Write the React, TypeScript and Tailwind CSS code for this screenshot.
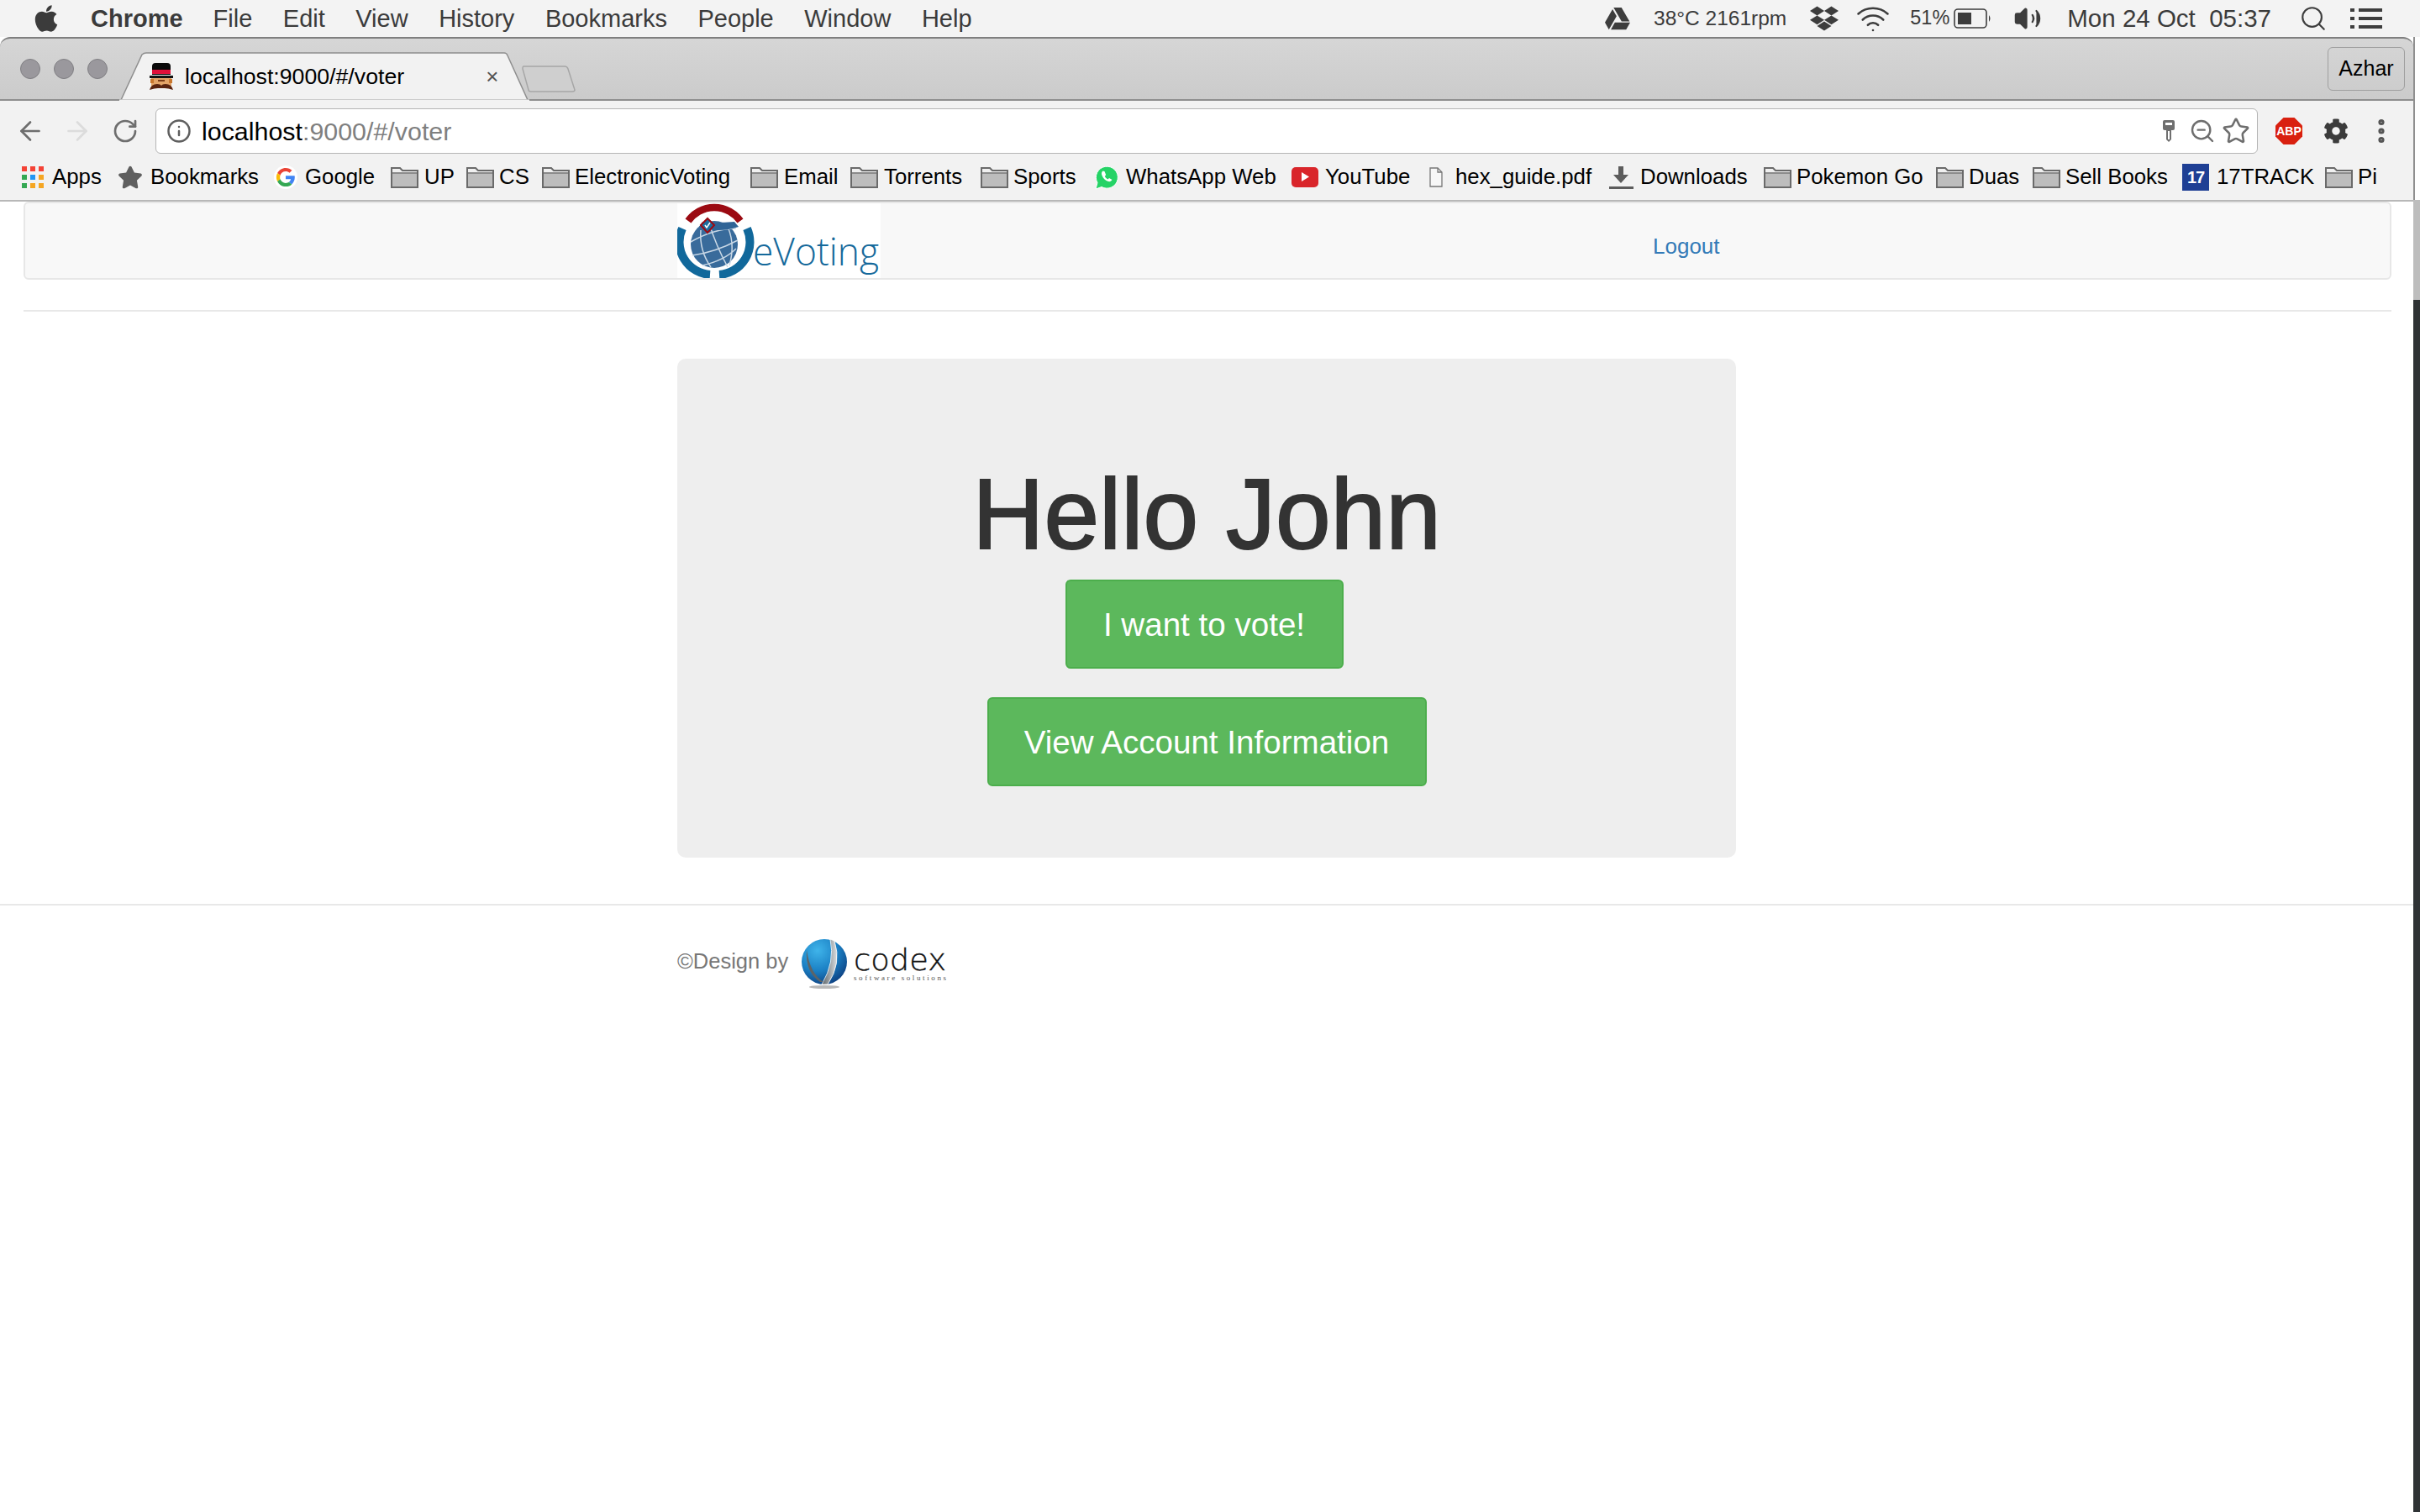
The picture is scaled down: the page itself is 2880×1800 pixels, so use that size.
import { ArrowLeft, ArrowRight, EllipsisVertical, Info, RotateCw, Search, Star, Volume2, Wifi, ZoomOut } from 'lucide-react';
import { FaApple, FaCog, FaDropbox, FaGoogleDrive, FaStar } from 'react-icons/fa';

const menuItems = ['File', 'Edit', 'View', 'History', 'Bookmarks', 'People', 'Window', 'Help'];

const Folder = () => (
  <svg width="33" height="26" viewBox="0 0 33 26" className="shrink-0">
    <path d="M1 25V2h10l3 3h18v20z" fill="#f0f0f0" stroke="#6a6a6a" strokeWidth="2" />
    <rect x="2" y="9" width="29" height="15" fill="#bdbdbd" />
    <path d="M1 8h31" stroke="#6a6a6a" strokeWidth="1.5" />
  </svg>
);

const AppsIcon = () => {
  const colours = ['#f44336', '#f44336', '#f44336', '#34a853', '#2196f3', '#f5a623', '#34a853', '#f5a623', '#f5a623'];
  return (
    <div className="grid grid-cols-3 gap-[4px] shrink-0">
      {colours.map((c, i) => (
        <div key={i} className="w-[6px] h-[6px]" style={{ backgroundColor: c }} />
      ))}
    </div>
  );
};

const GoogleIcon = () => (
  <svg width="28" height="28" viewBox="0 0 48 48" className="shrink-0">
    <circle cx="24" cy="24" r="24" fill="#fff" />
    <path fill="#ea4335" d="M24 12c3 0 5.700 1 7.800 3l5-5C33.700 7.200 29.200 5 24 5 16.600 5 10.200 9.300 7.100 15.500l5.800 4.500C14.400 15.400 18.800 12 24 12z" />
    <path fill="#4285f4" d="M42.500 24.500c0-1.300-.1-2.500-.3-3.500H24v7h10.500c-.5 2.500-1.900 4.500-3.900 6l5.700 4.400c3.700-3.400 6.200-8 6.200-13.900z" />
    <path fill="#fbbc05" d="M12.900 28c-.4-1.200-.6-2.600-.6-4s.2-2.800.6-4l-5.800-4.500C5.800 18 5 21 5 24s.8 6 2.100 8.500z" />
    <path fill="#34a853" d="M24 43c5.100 0 9.500-1.700 12.300-4.600L30.600 34c-1.600 1.100-3.800 1.900-6.600 1.900-5.200 0-9.600-3.400-11.100-8l-5.800 4.600C10.200 38.700 16.600 43 24 43z" />
  </svg>
);

const WhatsAppIcon = () => (
  <svg width="28" height="30" viewBox="0 0 28 30" className="shrink-0">
    <path d="M1 29l2-7.500A13 13 0 1 1 8 26.500z" fill="#25d366" stroke="#fff" strokeWidth="1" />
    <path d="M9.500 7.500c-1.500 1-2 3-1 5.500 1.500 3.500 4 6 7.500 7 2 .5 3.800-.5 4.500-2l-3.500-2-1.500 1.500c-1.500-.7-3-2.300-3.700-3.800l1.400-1.500-1.700-4.200z" fill="#fff" />
  </svg>
);

const YouTubeIcon = () => (
  <div className="w-[32px] h-[24px] rounded-[5px] bg-[#d9252a] flex items-center justify-center shrink-0">
    <svg width="9" height="11" viewBox="0 0 10 12">
      <path d="M0 0l10 6-10 6z" fill="#fff" />
    </svg>
  </div>
);

const PdfIcon = () => (
  <svg width="18" height="24" viewBox="0 0 18 24" className="shrink-0">
    <path d="M2 1h9l5 5v17H2z" fill="#f7f7f7" stroke="#777" strokeWidth="1.300" />
    <path d="M11 1v5h5" fill="none" stroke="#777" strokeWidth="1.300" />
  </svg>
);

const DownloadIcon = () => (
  <svg width="29" height="30" viewBox="0 0 29 30" className="shrink-0">
    <path d="M11 2h6v10h6L14 22 5 12h6z" fill="#5c5c5c" />
    <rect y="26" width="29" height="3" fill="#5c5c5c" />
  </svg>
);

const TrackIcon = () => (
  <div className="w-[32px] h-[32px] bg-[#1e3f94] flex items-center justify-center shrink-0">
    <span className="text-white font-bold text-[20px] leading-none tracking-[-1px] font-['Liberation_Sans',sans-serif]">17</span>
  </div>
);

const bookmarks = [
  { label: 'Apps', icon: <AppsIcon />, cls: 'w-[114px] gap-[10px]' },
  { label: 'Bookmarks', icon: <FaStar size={30} color="#5f5f5f" className="shrink-0" />, cls: 'w-[186px] gap-[9px]' },
  { label: 'Google', icon: <GoogleIcon />, cls: 'w-[139px] gap-[9px]' },
  { label: 'UP', icon: <Folder />, cls: 'w-[90px] gap-[7px]' },
  { label: 'CS', icon: <Folder />, cls: 'w-[90px] gap-[6px]' },
  { label: 'ElectronicVoting', icon: <Folder />, cls: 'w-[248px] gap-[6px]' },
  { label: 'Email', icon: <Folder />, cls: 'w-[119px] gap-[7px]' },
  { label: 'Torrents', icon: <Folder />, cls: 'w-[155px] gap-[7px]' },
  { label: 'Sports', icon: <Folder />, cls: 'w-[136px] gap-[6px]' },
  { label: 'WhatsApp Web', icon: <WhatsAppIcon />, cls: 'w-[234px] gap-[9px]' },
  { label: 'YouTube', icon: <YouTubeIcon />, cls: 'w-[163px] gap-[8px]' },
  { label: 'hex_guide.pdf', icon: <PdfIcon />, cls: 'w-[215px] gap-[14px]' },
  { label: 'Downloads', icon: <DownloadIcon />, cls: 'w-[184px] gap-[8px]' },
  { label: 'Pokemon Go', icon: <Folder />, cls: 'w-[205px] gap-[6px]' },
  { label: 'Duas', icon: <Folder />, cls: 'w-[115px] gap-[6px]' },
  { label: 'Sell Books', icon: <Folder />, cls: 'w-[178px] gap-[6px]' },
  { label: '17TRACK', icon: <TrackIcon />, cls: 'w-[170px] gap-[9px]' },
  { label: 'Pi', icon: <Folder />, cls: 'w-[61px] gap-[6px]' },
];

const Favicon = () => (
  <svg width="28" height="32" viewBox="0 0 28 32" className="shrink-0">
    <path d="M3 14V4q0-4 4-4h14q4 0 4 4v10z" fill="#0a0a0a" />
    <rect x="3" y="8" width="22" height="5" fill="#e0103a" />
    <rect y="15" width="28" height="3" fill="#111" />
    <rect x="2" y="18" width="24" height="10" fill="#e3a468" />
    <rect x="1" y="19" width="4" height="5" fill="#c9772e" />
    <rect x="23" y="19" width="4" height="5" fill="#c9772e" />
    <path d="M0 32q2-7 9-7 4 0 5 2 1-2 5-2 7 0 9 7-6-2-10-2h-8q-4 0-10 2z" fill="#5a2410" />
    <rect x="10" y="20" width="8" height="2" fill="#7a3b16" />
  </svg>
);

const KeyIcon = () => (
  <svg width="16" height="26" viewBox="0 0 16 26">
    <rect x="1" width="14" height="12" rx="2" fill="#6f6f6f" />
    <rect x="4" y="3" width="8" height="3" fill="#fff" />
    <path d="M5 12h6v11l-3 3-3-3z" fill="#6f6f6f" />
    <rect x="7" y="13" width="2" height="10" fill="#fff" />
  </svg>
);

const AbpIcon = () => (
  <div className="relative w-[32px] h-[32px]">
    <svg width="32" height="32" viewBox="0 0 32 32" className="absolute inset-0">
      <path d="M9.500 0h13L32 9.500v13L22.500 32h-13L0 22.500v-13z" fill="#d9200f" />
    </svg>
    <span className="absolute inset-0 flex items-center justify-center text-white font-bold text-[14px] font-['Liberation_Sans',sans-serif]">ABP</span>
  </div>
);

const Battery = () => (
  <svg width="46" height="24" viewBox="0 0 46 24">
    <rect x="1" y="1" width="38" height="22" rx="4" fill="none" stroke="#3d3d3d" strokeWidth="1.6" />
    <rect x="5" y="5" width="16" height="14" fill="#3d3d3d" />
    <path d="M42 8q3 4 0 8z" fill="#3d3d3d" />
  </svg>
);

const ListIcon = () => (
  <svg width="38" height="26" viewBox="0 0 38 26">
    {[1, 11, 21].map((y) => (
      <g key={y} fill="#3d3d3d">
        <rect y={y} width="5" height="4" />
        <rect x="10" y={y} width="28" height="4" />
      </g>
    ))}
  </svg>
);

const EVotingLogo = () => (
  <svg width="242" height="89" viewBox="0 0 242 89" className="bg-white">
    <path d="M13 21A38 38 0 0 1 75 21" fill="none" stroke="#9b0a12" strokeWidth="8.500" />
    <path d="M6 30A39 39 0 0 0 39 85" fill="none" stroke="#11689b" strokeWidth="10" />
    <path d="M83 30A39 39 0 0 1 50 85" fill="none" stroke="#11689b" strokeWidth="10" />
    <g transform="translate(0 2)">
      <circle cx="44" cy="47" r="28" fill="#396b9b" />
      <path d="M16 44Q44 28 70 28M18 60Q46 56 72 42M30 72Q56 66 70 52M38 22Q46 48 60 74M58 22Q70 44 62 72M28 30Q26 54 40 74" fill="none" stroke="#c9d8e6" strokeWidth="1.500" />
      <path d="M26 26Q48 34 73 26 L68 20Q44 22 30 20z" fill="#2f6496" />
    </g>
    <g transform="translate(-2 6)">
      <path d="M30 20l8-8 8 8-8 9z" fill="#1b6d9f" stroke="#9b0a12" strokeWidth="2" />
      <path d="M35 20l2 3 4-6" fill="none" stroke="#fff" strokeWidth="1.500" />
    </g>
    <text x="90" y="74" fontFamily="'Open Sans', sans-serif" fontWeight="300" fontSize="46" fill="#15699b" textLength="150" lengthAdjust="spacingAndGlyphs">eVoting</text>
  </svg>
);

const CodexLogo = () => (
  <svg width="180" height="64" viewBox="0 0 180 64">
    <defs>
      <radialGradient id="sphere" cx="0.35" cy="0.25" r="0.9">
        <stop offset="0" stopColor="#3fb4ea" />
        <stop offset="0.5" stopColor="#1b80c4" />
        <stop offset="1" stopColor="#0a2f6f" />
      </radialGradient>
      <linearGradient id="swoosh" x1="0" y1="0" x2="1" y2="0">
        <stop offset="0" stopColor="#5d6468" />
        <stop offset="1" stopColor="#d8dde0" />
      </linearGradient>
    </defs>
    <ellipse cx="29" cy="58" rx="18" ry="2" fill="#b8b8b8" />
    <circle cx="29" cy="28" r="27" fill="url(#sphere)" />
    <path d="M36 1Q42 28 26 55L33 55Q50 30 41 3z" fill="url(#swoosh)" stroke="#fff" strokeWidth="0.800" />
    <path d="M8 14Q12 42 28 52L24 52Q6 40 8 14z" fill="#5d6468" />
    <text x="64" y="38" fontFamily="'DejaVu Sans', sans-serif" fontWeight="300" fontSize="36" fill="#111" stroke="#111" strokeWidth="0.400" textLength="110" lengthAdjust="spacingAndGlyphs">codex</text>
    <text x="64" y="50" fontFamily="'Liberation Serif', serif" fontSize="9" fill="#555" textLength="110">software solutions</text>
  </svg>
);

export default function App() {
  return (
    <div className="w-[2880px] h-[1800px] bg-white overflow-hidden flex flex-col font-['Liberation_Sans',Arial,sans-serif]">
      {/* mac menu bar */}
      <div className="h-[44px] shrink-0 bg-[#f3f3f3] flex items-center text-[#3b3b3b] text-[29px] leading-none">
        <FaApple size={36} className="ml-[37px] text-[#3b3b3b]" />
        <span className="ml-[35px] font-bold">Chrome</span>
        <div className="ml-[36px] flex gap-[36.500px]">
          {menuItems.map((m) => (
            <span key={m}>{m}</span>
          ))}
        </div>
        <div className="ml-auto flex items-center">
          <FaGoogleDrive size={30} color="#3d3d3d" />
          <span className="ml-[28px] text-[24.500px]">38°C 2161rpm</span>
          <FaDropbox size={34} color="#3d3d3d" className="ml-[28px]" />
          <Wifi size={42} strokeWidth={1.500} color="#3d3d3d" className="ml-[20px]" />
          <span className="ml-[23px] text-[23.500px]">51%</span>
          <div className="ml-[5px] flex"><Battery /></div>
          <Volume2 size={34} strokeWidth={1.500} color="#3d3d3d" fill="#3d3d3d" className="ml-[25px]" />
          <span className="ml-[30px] whitespace-pre text-[29.500px]">Mon 24 Oct  05:37</span>
          <Search size={34} strokeWidth={1.500} color="#3d3d3d" className="ml-[33px]" />
          <div className="ml-[27px] mr-[45px] flex"><ListIcon /></div>
        </div>
      </div>

      <div className="flex flex-1">
        {/* browser window */}
        <div className="w-[2872px]">
          <div className="relative h-[76px] bg-gradient-to-b from-[#d6d6d6] to-[#cbcbcb] border-t-2 border-b-2 border-t-[#7f7f7f] border-b-[#8e8e8e] rounded-t-[12px] flex items-center">
            <div className="ml-[24px] flex gap-[16px]">
              <div className="w-[24px] h-[24px] rounded-full bg-[#9a989d] border border-[#807f83]" />
              <div className="w-[24px] h-[24px] rounded-full bg-[#9a989d] border border-[#807f83]" />
              <div className="w-[24px] h-[24px] rounded-full bg-[#9a989d] border border-[#807f83]" />
            </div>
            {/* active tab */}
            <svg width="500" height="74" viewBox="0 0 500 74" className="absolute left-[140px] top-0">
              <path d="M4 73L29 19Q31 17 34 17H460Q463 17 464 20L488 73z" fill="#f2f2f2" stroke="#8e8e8e" strokeWidth="1.500" />
              <path d="M2 74H490" stroke="#f2f2f2" strokeWidth="3" />
            </svg>
            <div className="absolute left-[178px] top-[29px] flex items-center">
              <Favicon />
              <span className="ml-[14px] text-[26.700px] leading-none text-black">localhost:9000/#/voter</span>
              <span className="ml-[97px] text-[26px] leading-none text-[#555]">×</span>
            </div>
            <svg width="70" height="36" viewBox="0 0 70 36" className="absolute left-[620px] top-[31px]">
              <path d="M3 2H52Q55 2 56 5L64 30Q64 32 61 32H12Q9 32 9 30L2 5Q2 2 3 2z" fill="#cfcfcf" stroke="#a6a6a6" strokeWidth="1.500" />
            </svg>
            <div className="ml-auto mr-[10px] w-[92px] h-[52px] border border-[#9f9f9f] rounded-[6px] flex items-center justify-center text-black text-[25px]">Azhar</div>
          </div>

          <div className="h-[72px] bg-[#f2f2f2] flex items-center">
            <ArrowLeft size={36} strokeWidth={1.800} color="#6e6e6e" className="ml-[18px]" />
            <ArrowRight size={36} strokeWidth={1.800} color="#dcdcdc" className="ml-[20px]" />
            <RotateCw size={32} strokeWidth={2} color="#6e6e6e" className="ml-[23px]" />
            <div className="ml-[20px] w-[2502px] h-[54px] bg-white border border-[#b5b5b5] rounded-[6px] flex items-center">
              <Info size={30} strokeWidth={2} color="#5f5f5f" className="ml-[12px]" />
              <span className="ml-[12px] text-[30.400px] leading-[36px] text-black">localhost<span className="text-[#7f7f7f]">:9000/#/voter</span></span>
              <div className="ml-auto mr-[8px] flex items-center">
                <KeyIcon />
                <ZoomOut size={32} strokeWidth={1.800} color="#6e6e6e" className="ml-[16px]" />
                <Star size={34} strokeWidth={1.800} color="#6e6e6e" className="ml-[7px]" />
              </div>
            </div>
            <div className="ml-[21px]"><AbpIcon /></div>
            <FaCog size={30} color="#3b3b3b" className="ml-[25px]" />
            <EllipsisVertical size={36} strokeWidth={2.800} color="#555" className="ml-[21px]" />
          </div>

          <div className="h-[48px] bg-[#f2f2f2] border-b-2 border-[#b8b8b8] pl-[26px] pb-[8px] flex items-center text-[25.800px] leading-none text-black whitespace-nowrap">
            {bookmarks.map((b) => (
              <div key={b.label} className={`flex items-center shrink-0 ${b.cls}`}>
                {b.icon}
                <span>{b.label}</span>
              </div>
            ))}
          </div>

          {/* page */}
          <div className="pl-[28px] pr-[26px]">
            <div className="h-[93px] bg-[#f8f8f8] border-2 border-[#e7e7e7] rounded-[6px]">
              <div className="w-[1260px] ml-[776px] flex items-start">
                <EVotingLogo />
                <a className="ml-[919px] mt-[38px] text-[26px] leading-none text-[#337ab7]">Logout</a>
              </div>
            </div>
            <div className="mt-[36px] h-[2px] bg-[#e8e8e8]" />
            <div className="mt-[56px] w-[1260px] h-[594px] ml-[778px] bg-[#eeeeee] rounded-[10px] flex flex-col items-center">
              <h1 className="mt-[127px] text-[118px] leading-[116px] text-[#333333] [-webkit-text-stroke:2px_#333333]">Hello John</h1>
              <button className="mt-[20px] mr-[6px] w-[331px] h-[106px] pt-[2px] bg-[#5cb85c] border-2 border-[#4cae4c] rounded-[6px] text-white text-[38.600px]">I want to vote!</button>
              <button className="mt-[34px] w-[523px] h-[106px] pt-[2px] bg-[#5cb85c] border-2 border-[#4cae4c] rounded-[6px] text-white text-[38.600px]">View Account Information</button>
            </div>
          </div>
          <div className="mt-[55px] h-[2px] bg-[#e8e8e8]" />
          <div className="mt-[39px] w-[1260px] mx-auto flex items-center">
            <span className="-mt-[8px] text-[25.500px] leading-none text-[#777777]">©Design by</span>
            <div className="ml-[14px] flex"><CodexLogo /></div>
          </div>
        </div>

        {/* sliver of desktop to the right of the window */}
        <div className="w-[8px] flex flex-col">
          <div className="h-[194px] bg-white border-l-2 border-[#8f8f8f]" />
          <div className="h-[119px] bg-[#bdbdbd]" />
          <div className="flex-1 bg-[#2f3335]" />
        </div>
      </div>
    </div>
  );
}
